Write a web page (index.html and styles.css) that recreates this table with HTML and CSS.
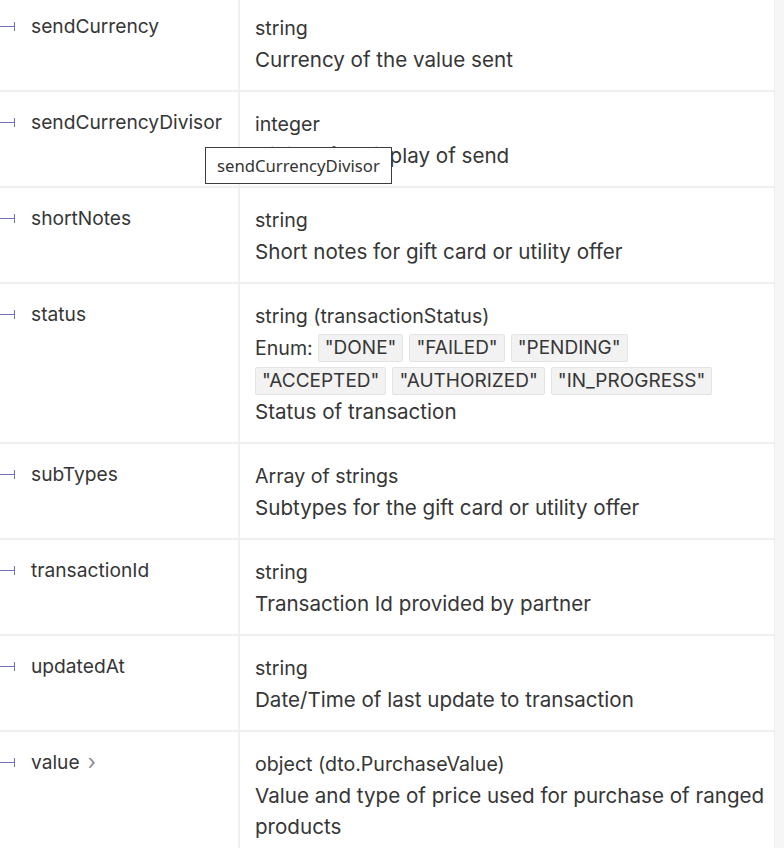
FILE: index.html
```html
<!DOCTYPE html>
<html lang="en">
<head>
<meta charset="utf-8">
<title>Schema properties</title>
<link rel="stylesheet" href="styles.css">
</head>
<body>
<div class="page">
  <div class="props">
    <div class="row">
      <div class="name-cell"><span class="branch"></span><span class="pname">sendCurrency</span></div>
      <div class="detail-cell">
        <div class="type">string</div>
        <div class="desc">Currency of the value sent</div>
      </div>
    </div>
    <div class="row">
      <div class="name-cell"><span class="branch"></span><span class="pname">sendCurrencyDivisor</span></div>
      <div class="detail-cell">
        <div class="type">integer</div>
        <div class="desc">Divisor for display of send</div>
      </div>
      <div class="tooltip">sendCurrencyDivisor</div>
    </div>
    <div class="row">
      <div class="name-cell"><span class="branch"></span><span class="pname">shortNotes</span></div>
      <div class="detail-cell">
        <div class="type">string</div>
        <div class="desc">Short notes for gift card or utility offer</div>
      </div>
    </div>
    <div class="row">
      <div class="name-cell"><span class="branch"></span><span class="pname">status</span></div>
      <div class="detail-cell">
        <div class="type">string (transactionStatus)</div>
        <div class="enum">
          <span class="enum-label">Enum:</span>
          <span class="chip">"DONE"</span>
          <span class="chip">"FAILED"</span>
          <span class="chip">"PENDING"</span>
          <span class="chip">"ACCEPTED"</span>
          <span class="chip">"AUTHORIZED"</span>
          <span class="chip">"IN_PROGRESS"</span>
        </div>
        <div class="desc">Status of transaction</div>
      </div>
    </div>
    <div class="row">
      <div class="name-cell"><span class="branch"></span><span class="pname">subTypes</span></div>
      <div class="detail-cell">
        <div class="type">Array of strings</div>
        <div class="desc">Subtypes for the gift card or utility offer</div>
      </div>
    </div>
    <div class="row">
      <div class="name-cell"><span class="branch"></span><span class="pname">transactionId</span></div>
      <div class="detail-cell">
        <div class="type">string</div>
        <div class="desc">Transaction Id provided by partner</div>
      </div>
    </div>
    <div class="row">
      <div class="name-cell"><span class="branch"></span><span class="pname">updatedAt</span></div>
      <div class="detail-cell">
        <div class="type">string</div>
        <div class="desc">Date/Time of last update to transaction</div>
      </div>
    </div>
    <div class="row">
      <div class="name-cell"><span class="branch"></span><span class="pname">value</span><span class="chev">&#x203A;</span></div>
      <div class="detail-cell">
        <div class="type">object (dto.PurchaseValue)</div>
        <div class="desc">Value and type of price used for purchase of ranged products</div>
      </div>
    </div>
    <div class="row row-next"></div>
  </div>
  <div class="strip"></div>
</div>
</body>
</html>
```
FILE: styles.css
```css
html, body {
  margin: 0;
  padding: 0;
  background: #ffffff;
  overflow: hidden;
}
body {
  font-family: Inter, "Noto Sans", sans-serif;
  color: #363636;
  height: 848px;
}
.page {
  display: flex;
  width: 784px;
  height: 848px;
  overflow: hidden;
}
.props {
  width: 774px;
  margin-top: -6px;
  display: flex;
  flex-direction: column;
}
.row {
  position: relative;
  display: grid;
  grid-template-columns: 240px 1fr;
  border-top: 2px solid #f0f0f0;
}
.row-next {
  height: 20px;
  background: #f0f0f0;
}
.name-cell {
  border-right: 2px solid #f0f0f0;
  padding: 17px 0 15px 0;
  display: flex;
  align-items: flex-start;
  line-height: 26px;
}
.branch {
  display: inline-block;
  width: 15px;
  height: 26px;
  position: relative;
  flex: none;
  margin-right: 16px;
}
.branch::before {
  content: "";
  position: absolute;
  left: 0;
  top: 13px;
  width: 14px;
  height: 1px;
  background: #7171b3;
}
.branch::after {
  content: "";
  position: absolute;
  left: 14px;
  top: 9px;
  width: 1px;
  height: 9px;
  background: #7171b3;
}
.pname {
  font-size: 19.2px;
}
.chev {
  font-size: 21px;
  color: #8a8a8a;
  margin-left: 8px;
  line-height: 26px;
}
.detail-cell {
  padding: 17px 0 15px 15px;
}
.type {
  font-size: 19.6px;
  line-height: 31px;
}
.desc {
  font-size: 20.6px;
  line-height: 31px;
}
.enum {
  display: flex;
  flex-wrap: wrap;
  align-items: center;
  gap: 5px 6px;
  padding: 2px 0 1px 0;
  max-width: 490px;
  font-size: 19px;
}
.enum-label {
  line-height: 28px;
  margin-right: -1px;
  font-size: 19.6px;
}
.chip {
  background: #f2f2f2;
  border: 1px solid #e4e4e4;
  border-radius: 2px;
  padding: 0 6px;
  line-height: 26px;
}
.tooltip {
  position: absolute;
  left: 205px;
  top: 55px;
  background: #ffffff;
  border: 1px solid #3c3c3c;
  font-family: "Noto Sans", "Open Sans", sans-serif;
  font-size: 16.7px;
  line-height: 35px;
  padding: 0 11px;
  color: #333333;
  z-index: 2;
}
.strip {
  width: 10px;
  height: 848px;
  background: #f6f6f6;
  border-left: 1px solid #f0f0f0;
  box-sizing: border-box;
}
```
